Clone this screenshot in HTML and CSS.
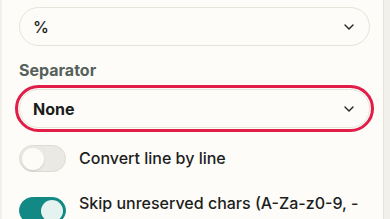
FILE: index.html
```html
<!DOCTYPE html>
<html lang="en">
<head>
    <meta charset="UTF-8">
    <meta name="viewport" content="width=device-width, initial-scale=1.0">
    <title>URL Encode Options</title>
    <link rel="stylesheet" href="styles.css">
</head>
<body>
    <div class="panel">
        <div class="select">
            <span class="select-value">%</span>
            <svg class="chevron" width="10" height="6" viewBox="0 0 10 6"><path d="M1 1l4 4 4-4" fill="none" stroke="#222" stroke-width="1.4" stroke-linecap="round" stroke-linejoin="round"/></svg>
        </div>

        <div class="label">Separator</div>
        <div class="select focused">
            <span class="select-value bold">None</span>
            <svg class="chevron" width="10" height="6" viewBox="0 0 10 6"><path d="M1 1l4 4 4-4" fill="none" stroke="#222" stroke-width="1.4" stroke-linecap="round" stroke-linejoin="round"/></svg>
        </div>

        <div class="option center">
            <span class="toggle"><span class="knob"></span></span>
            <span class="option-text">Convert line by line</span>
        </div>
        <div class="option">
            <span class="toggle on"><span class="knob"></span></span>
            <span class="option-text">Skip unreserved chars (A-Za-z0-9, -_.~)</span>
        </div>
    </div>
</body>
</html>
```

FILE: styles.css
```css
body {
    margin: 0;
    background-color: #f1f0eb;
    font-family: Inter, "Noto Sans", sans-serif;
    color: #1f2220;
}
.panel {
    margin-left: 2px;
    width: 351px;
    height: 260px;
    padding: 7px 13px 0 17px;
    background-color: #fdfcf8;
    border-right: 1px solid #e4e2db;
}
.select {
    height: 39px;
    box-sizing: border-box;
    border: 1px solid #e6e3da;
    border-radius: 20px;
    display: flex;
    align-items: center;
    justify-content: space-between;
    padding: 0 15px 0 13px;
    background-color: #fdfcf8;
}
.select-value {
    font-size: 16px;
    font-weight: 500;
    color: #1a1c1b;
}
.select-value.bold {
    font-weight: 700;
}
.select.focused {
    outline: 3px solid #e11d48;
    outline-offset: 1px;
}
.label {
    margin-top: 14px;
    margin-bottom: 8px;
    font-size: 16px;
    font-weight: 700;
    line-height: 21px;
    color: #55615b;
}
.option {
    display: flex;
    align-items: flex-start;
    gap: 13px;
    margin-top: 17px;
}
.option + .option {
    margin-top: 20px;
}
.option.center {
    align-items: center;
}
.option-text {
    font-size: 16px;
    font-weight: 500;
    line-height: 23px;
    color: #1c1e1d;
}
.toggle {
    flex: none;
    width: 47px;
    height: 27px;
    box-sizing: border-box;
    border-radius: 14px;
    background-color: #ebe9e4;
    border: 1px solid #dedbd3;
    display: flex;
    align-items: center;
    padding: 0 2px;
}
.knob {
    width: 22px;
    height: 22px;
    border-radius: 50%;
    background-color: #fdfcf9;
    box-shadow: 0 1px 2px rgba(0,0,0,0.12);
}
.toggle.on {
    margin-top: 5px;
    background-color: #128985;
    border-color: #128985;
    justify-content: flex-end;
}
.toggle.on .knob {
    background-color: #e4f2f0;
}
```
